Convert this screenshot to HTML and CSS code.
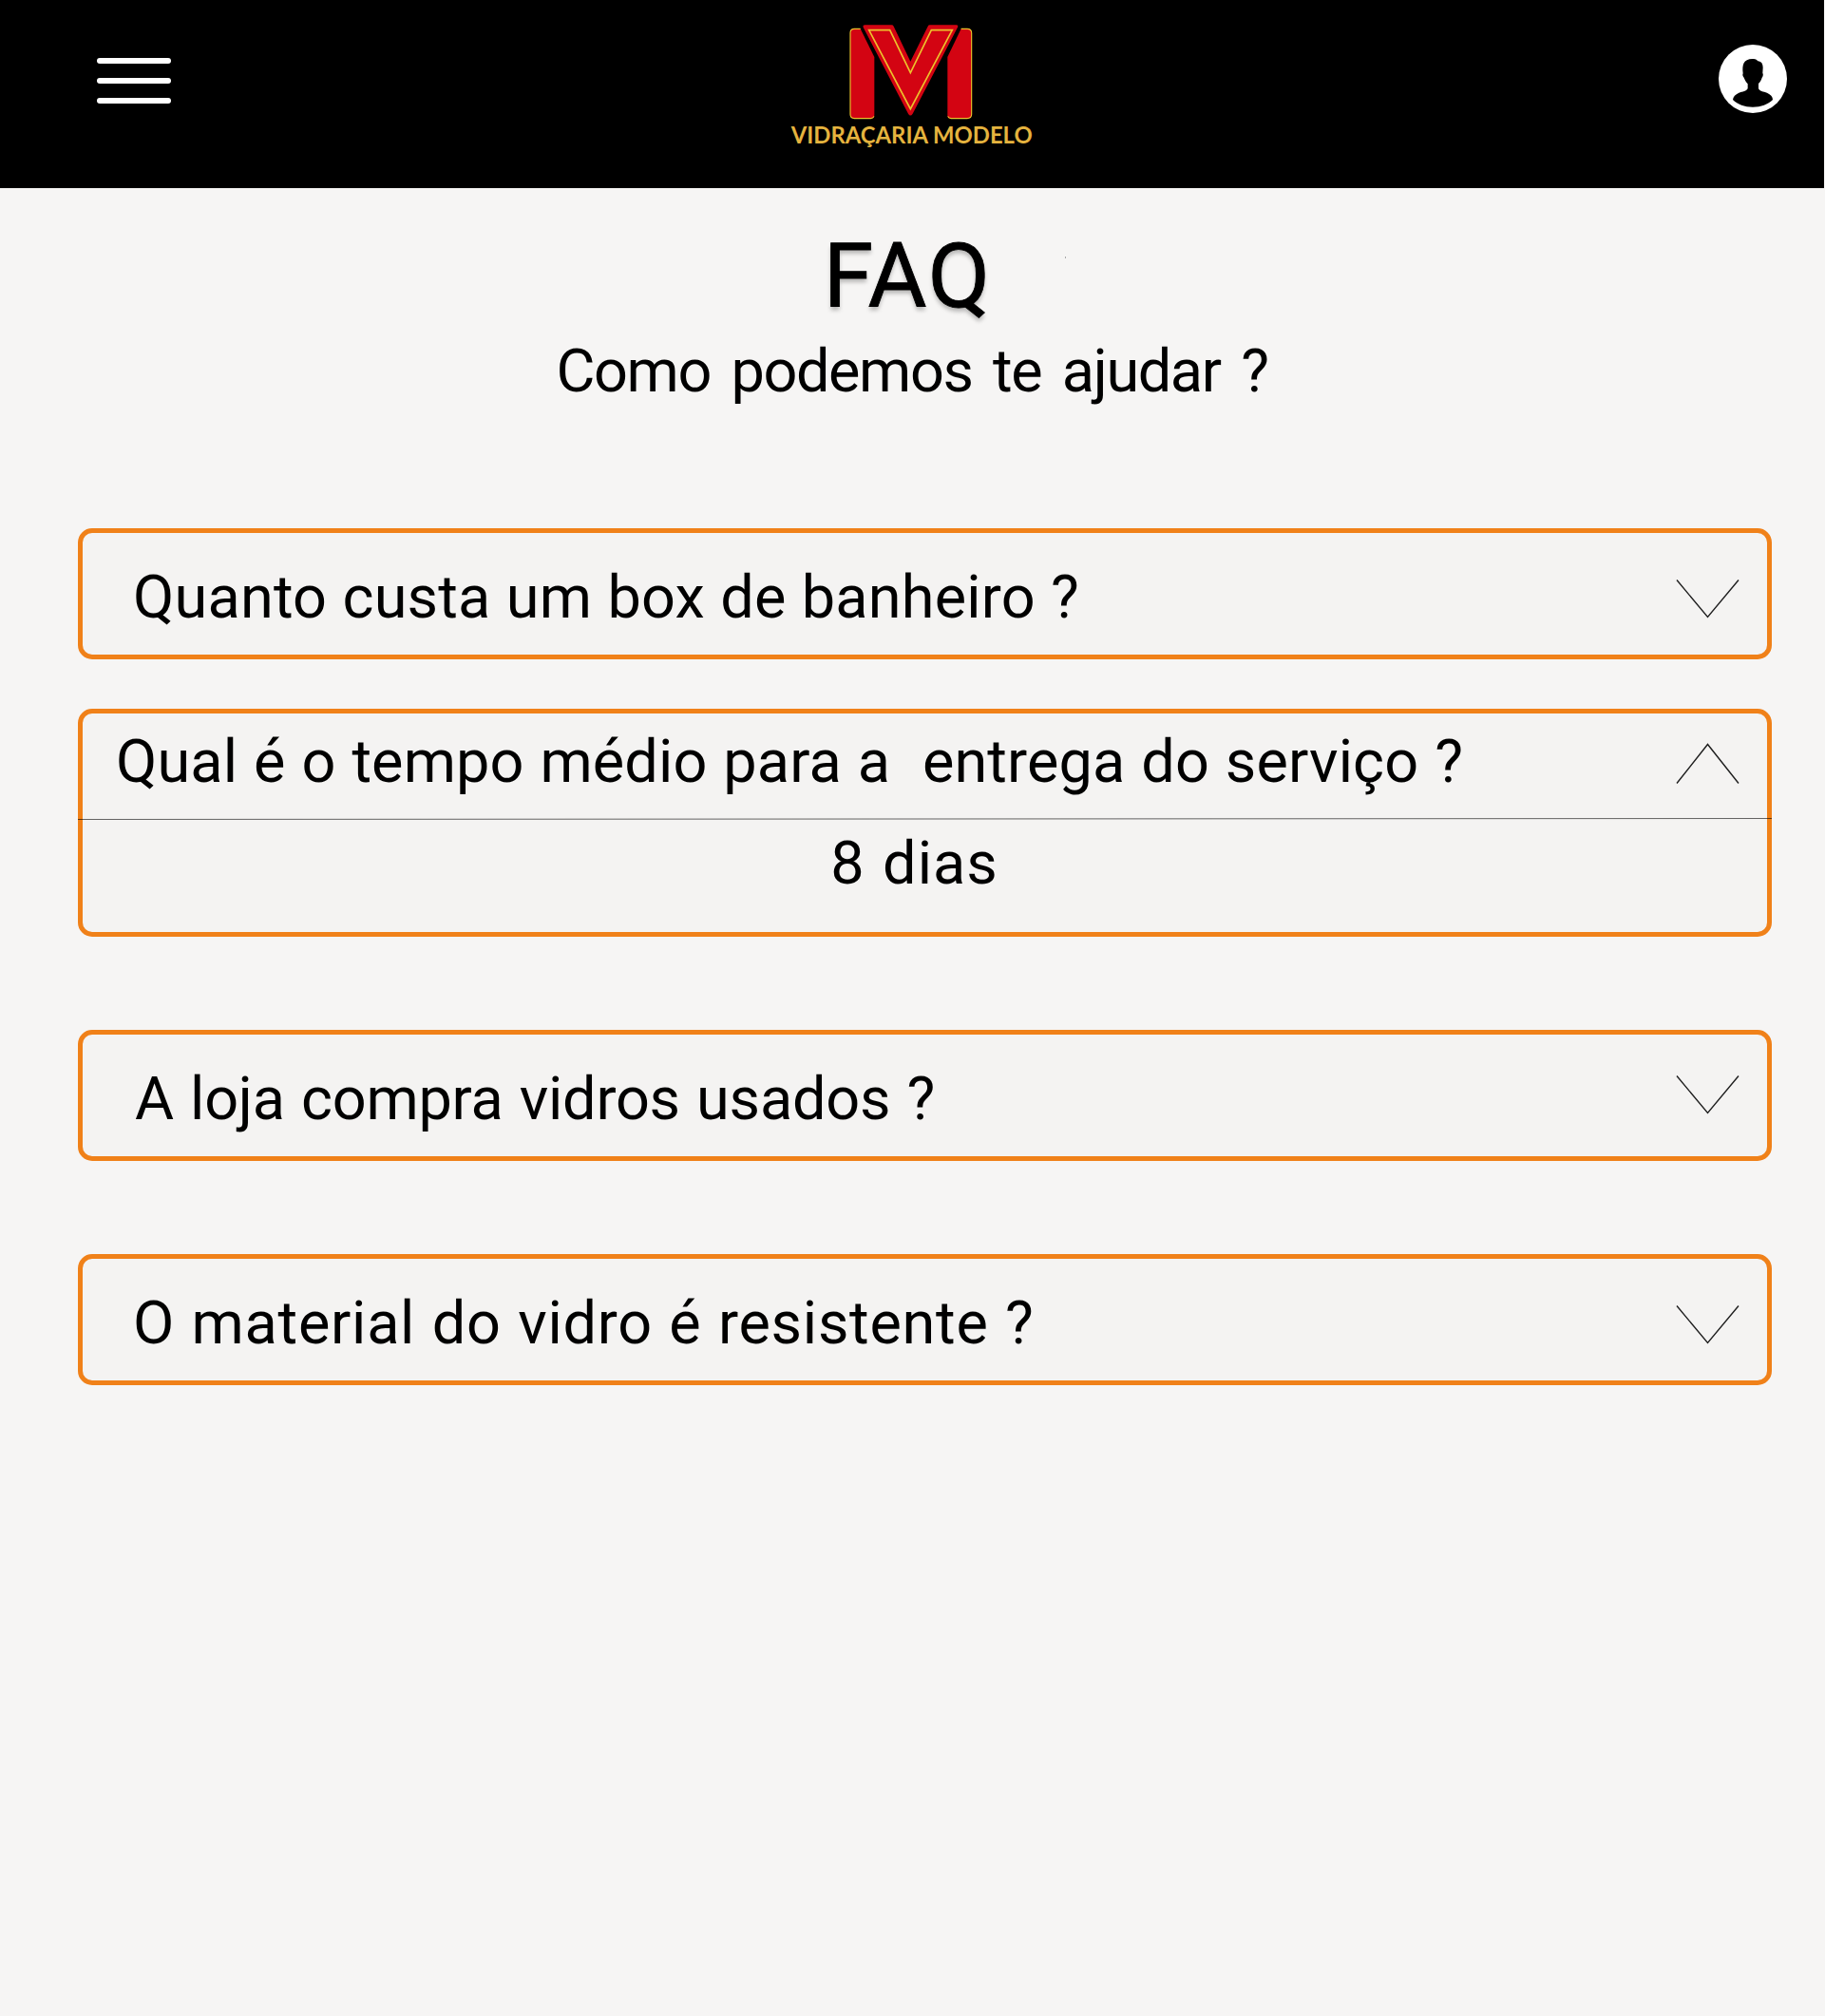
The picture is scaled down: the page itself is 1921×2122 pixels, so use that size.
FILE: index.html
```
<!DOCTYPE html>
<html lang="pt-BR">
<head>
<meta charset="utf-8">
<title>FAQ - Vidraçaria Modelo</title>
<link rel="stylesheet" href="styles.css">
</head>
<body>
<header class="topbar">
  <button class="menu" aria-label="Menu"><span></span><span></span><span></span></button>
  <svg class="logo" viewBox="0 0 840 564" role="img" aria-label="Vidraçaria Modelo">
    <g fill="#d30412">
      <path d="M257 61H238Q225 61 225 74V331Q225 344 238 344H291Q301 344 301 333V150Z"/>
      <path d="M575 61H594Q608 61 608 74V331Q608 344 594 344H542Q532 344 532 333V150Z"/>
      <path d="M271 49H356Q360 49 362 53L415 164L470 53Q472 49 476 49H560Q567 49 564 56L422 329Q415 340 408 329L266 56Q264 49 271 49Z"/>
    </g>
    <g fill="none" stroke="#edc22c" stroke-width="3.4">
      <path d="M257 61H238Q225 61 225 74V331Q225 344 238 344H290Q298 343 300 337"/>
      <path d="M575 61H594Q608 61 608 74V331Q608 344 594 344H543Q535 343 533 337"/>
      <path stroke-width="5" d="M284 65H350L415 200L481 65H547L415 314Z"/>
    </g>
    <text class="logo-name" x="38" y="422" textLength="762" lengthAdjust="spacingAndGlyphs">VIDRAÇARIA MODELO</text>
  </svg>
  <svg class="user" viewBox="0 0 216 216" role="img" aria-label="Conta">
    <circle cx="108" cy="108" r="108" fill="#fff"/>
    <path fill="#000" d="M107 45C117 44 121 48 124 52C135 53 140 61 140 73L139 90C142 93 140 101 137 104C135 112 131 117 126 123V138C128 147 142 148 153 152C164 157 171 164 171 174C156 189 134 197 108 197S60 189 45 174C46 164 53 157 64 152C75 148 89 147 92 138V124C86 117 83 112 80 104C76 101 75 94 77 91C74 63 78 46 107 45Z"/>
  </svg>
</header>
<main>
  <div class="hero">
    <h1>FAQ</h1>
    <span class="speck"></span>
    <p class="lead">Como podemos te ajudar ?</p>
  </div>
  <section class="faq">
    <article class="item">
      <div class="row"><h2 class="q q-box">Quanto custa um box de banheiro ?</h2>
        <svg class="chev low" viewBox="0 0 67 42"><path d="M1 1.5L33.5 40.5L66 1.5"/></svg></div>
    </article>
    <article class="item open">
      <div class="row"><h2 class="q q-prazo">Qual é o tempo médio para a  entrega do serviço ?</h2>
        <svg class="chev up" viewBox="0 0 67 44"><path d="M1 42.5L33.5 1.5L66 42.5"/></svg></div>
      <svg class="rule" viewBox="0 0 1783 3" preserveAspectRatio="none"><path d="M0 1.5L1783 .5"/></svg>
      <p class="answer">8 dias</p>
    </article>
    <article class="item">
      <div class="row"><h2 class="q q-usados">A loja compra vidros usados ?</h2>
        <svg class="chev" viewBox="0 0 67 42"><path d="M1 1.5L33.5 40.5L66 1.5"/></svg></div>
    </article>
    <article class="item">
      <div class="row"><h2 class="q q-material">O material do vidro é resistente ?</h2>
        <svg class="chev low" viewBox="0 0 67 42"><path d="M1 1.5L33.5 40.5L66 1.5"/></svg></div>
    </article>
  </section>
</main>
</body>
</html>
```
FILE: styles.css
```
* { box-sizing: border-box; margin: 0; }
body {
  min-height: 2122px;
  background: #f6f5f4;
  color: #000;
  font-family: Roboto, "Open Sans", sans-serif;
}
svg { display: block; flex: none; }

.topbar {
  display: grid;
  grid-template-columns: 718px 280px 1fr;
  align-items: start;
  width: 1920px;
  height: 198px;
  padding: 10px 39px 0 102px;
  background: #000;
}
.menu {
  display: flex;
  flex-direction: column;
  gap: 15px;
  width: 78px;
  margin-top: 51px;
  padding: 0;
  border: 0;
  background: none;
}
.menu span { height: 6px; border-radius: 3px; background: #fff; }
.logo { width: 280px; height: 188px; }
.logo-name { font: 700 73px Lato, sans-serif; fill: #e5b33e; }
.user { width: 72px; height: 72px; margin-top: 37px; justify-self: end; }

.hero { position: relative; width: 1920px; height: 358px; padding-top: 38px; text-align: center; }
h1 {
  padding-right: 9px;
  font-size: 95px;
  font-weight: 400;
  line-height: 110px;
  letter-spacing: 2px;
  text-shadow: 0 4px 4px rgba(0, 0, 0, .25);
  -webkit-text-stroke: .8px #000;
}
.speck { position: absolute; left: 1121px; top: 72px; width: 1px; height: 2px; background: #aaa; }
.lead {
  margin-top: 5px;
  font-size: 63px;
  line-height: 80px;
  letter-spacing: -1.4px;
  word-spacing: 7.3px;
}

.faq { display: flex; flex-direction: column; gap: 98px; width: 1783px; margin-left: 82px; }
.item {
  height: 138px;
  padding-top: 28px;
  border: 5px solid #f08119;
  border-radius: 15px;
  background: #f4f3f2;
}
.item.open { height: 240px; margin-top: -46px; padding-top: 11px; }
.row { display: flex; justify-content: space-between; height: 80px; padding-right: 30px; }
.q { font-size: 63px; font-weight: 400; line-height: 80px; white-space: pre; }
.q-box { padding-left: 53px; letter-spacing: .19px; word-spacing: .46px; }
.q-prazo { padding-left: 35px; letter-spacing: .12px; word-spacing: 1.14px; }
.q-usados { padding-left: 55px; letter-spacing: -.22px; word-spacing: 1.76px; }
.q-material { padding-left: 53px; letter-spacing: .72px; word-spacing: 1.2px; }

.chev { width: 67px; height: 42px; margin: 14px -.5px 0 0; fill: none; stroke: #1e1e1e; stroke-width: 1.4; }
.chev.low { margin-top: 20px; }
.chev.up { height: 44px; margin-top: 20px; }

.rule { width: 1783px; height: 3px; margin: 19px -5px 0; }
.rule path { stroke: #000; stroke-opacity: .6; }
.answer {
  margin-top: 5px;
  padding-right: 22px;
  font-size: 63px;
  line-height: 80px;
  letter-spacing: 1px;
  word-spacing: 1.8px;
  text-align: center;
}
```
